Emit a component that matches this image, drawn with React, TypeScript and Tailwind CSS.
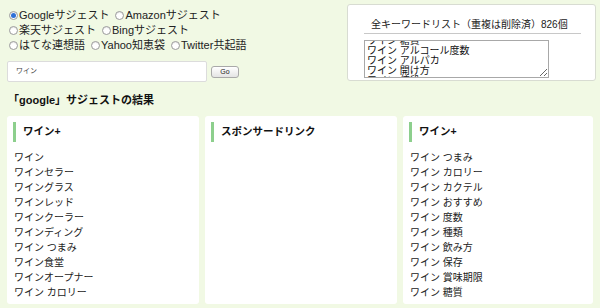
import { useEffect, useRef } from 'react';

const font = { fontFamily: '"Liberation Sans", "Noto Sans CJK JP", sans-serif' };

const col1 = ['ワイン', 'ワインセラー', 'ワイングラス', 'ワインレッド', 'ワインクーラー', 'ワインディング', 'ワイン つまみ', 'ワイン食堂', 'ワインオープナー', 'ワイン カロリー'];
const col3 = ['ワイン つまみ', 'ワイン カロリー', 'ワイン カクテル', 'ワイン おすすめ', 'ワイン 度数', 'ワイン 種類', 'ワイン 飲み方', 'ワイン 保存', 'ワイン 賞味期限', 'ワイン 糖質'];
const allWords = [...col3, 'ワイン アルコール度数', 'ワイン アルパカ', 'ワイン 開け方', 'ワイン 値段', 'ワイン 通販'];

function Radio({ label, checked }: { label: string; checked?: boolean }) {
  return (
    <label className="flex items-center mr-[6px]">
      <span className="w-[9px] h-[9px] rounded-full border border-[#9a9a9a] bg-white flex items-center justify-center mr-[1px] shadow-[inset_0_1px_1px_rgba(0,0,0,0.1)]">
        {checked && <span className="w-[5px] h-[5px] rounded-full bg-[#2e6fd6]" />}
      </span>
      <span>{label}</span>
    </label>
  );
}

function Card({ title, items }: { title: string; items: string[] }) {
  return (
    <div className="bg-white rounded-[3px] h-[188px] pt-[6px] px-[6px]">
      <div className="flex items-center h-[20px] border-l-[3px] border-[#8dcf8d] pl-[7px] font-bold text-[10.5px] text-[#111]">{title}</div>
      <ul className="mt-[8px] pl-[1px] text-[10px] text-[#222] leading-[15px]">
        {items.map((t, i) => (
          <li key={i}>{t}</li>
        ))}
      </ul>
    </div>
  );
}

export default function App() {
  const ta = useRef<HTMLTextAreaElement>(null);
  useEffect(() => {
    if (ta.current) ta.current.scrollTop = 95;
  }, []);
  return (
    <div className="w-[600px] h-[308px] bg-[#f1f9e4] overflow-hidden relative" style={font}>
      <div className="flex">
        <div className="pl-[9px] pt-[8px] w-[340px]">
          <div className="text-[11px] text-[#222] leading-[15px]">
            <div className="flex"><Radio label="Googleサジェスト" checked /><Radio label="Amazonサジェスト" /></div>
            <div className="flex"><Radio label="楽天サジェスト" /><Radio label="Bingサジェスト" /></div>
            <div className="flex"><Radio label="はてな連想語" /><Radio label="Yahoo知恵袋" /><Radio label="Twitter共起語" /></div>
          </div>
          <div className="flex items-center mt-[8px] -ml-[2px]">
            <div className="w-[200px] h-[21px] bg-white border border-[#dcdcdc] rounded-[2px] flex items-center pl-[8px] text-[7px] text-[#444]">ワイン</div>
            <button className="ml-[4px] w-[28px] h-[12px] rounded-[3px] border border-[#a9a9a9] bg-gradient-to-b from-white to-[#e4e4e4] text-[7px] text-[#222] leading-none">Go</button>
          </div>
        </div>
        <div className="ml-[7px] mt-[4px] w-[249px] h-[77px] bg-white border border-[#d8dcd2] rounded-[3px] pl-[16px] pr-[14px]">
          <div className="text-[10px] text-[#222] pl-[7px] pt-[13px] leading-[13px]">全キーワードリスト（重複は削除済）826個</div>
          <div className="h-px bg-[#c8c8c8] mt-[2px]" />
          <textarea
            ref={ta}
            readOnly
            defaultValue={allWords.join('\n')}
            className="mt-[6px] w-[185px] h-[38px] border border-[#a8a8a8] text-[10px] leading-[10px] text-[#111] pl-[2px] overflow-hidden resize-y block"
            style={font}
          />
        </div>
      </div>
      <div className="pl-[8px] mt-[10px] font-bold text-[11px] text-[#111] leading-[16px]">「google」サジェストの結果</div>
      <div className="grid grid-cols-[192px_192px_190px] gap-[6px] pl-[7px] mt-[8px]">
        <Card title="ワイン+" items={col1} />
        <Card title="スポンサードリンク" items={[]} />
        <Card title="ワイン+" items={col3} />
      </div>
    </div>
  );
}
